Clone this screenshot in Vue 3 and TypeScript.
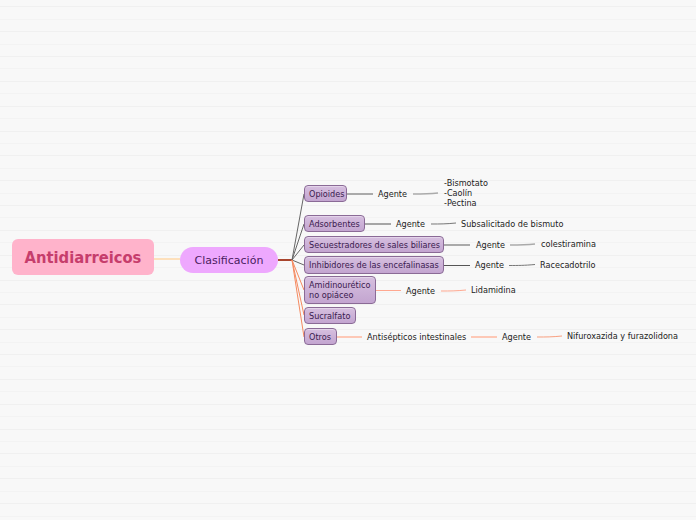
<script setup lang="ts">
interface Box { text: string[]; x: number; y: number; w: number; h: number }
interface Label { text: string[]; x: number; y: number }
interface Wire { d: string; c: string; w: number }

const rules = Array.from({ length: 42 }, (_, i) => ({
  y: Math.round(6.3 + i * 12.42) + 0.5,
  c: i % 2 === 0 ? '#f0f0f0' : '#f3f3f3',
}))

const boxes: Box[] = [
  { text: ['Opioides'], x: 304, y: 185, w: 43, h: 17 },
  { text: ['Adsorbentes'], x: 304, y: 215, w: 61, h: 17 },
  { text: ['Secuestradores de sales biliares'], x: 304, y: 236, w: 140, h: 17 },
  { text: ['Inhibidores de las encefalinasas'], x: 304, y: 256, w: 140, h: 18 },
  { text: ['Amidinourético', 'no opiáceo'], x: 304, y: 276, w: 72, h: 28 },
  { text: ['Sucralfato'], x: 304, y: 307, w: 52, h: 17 },
  { text: ['Otros'], x: 304, y: 328, w: 33, h: 17 },
]

const labels: Label[] = [
  { text: ['Agente'], x: 378, y: 194 },
  { text: ['-Bismotato', '-Caolín', '-Pectina'], x: 444, y: 193 },
  { text: ['Agente'], x: 396, y: 224 },
  { text: ['Subsalicitado de bismuto'], x: 461, y: 224 },
  { text: ['Agente'], x: 476, y: 245 },
  { text: ['colestiramina'], x: 541, y: 244 },
  { text: ['Agente'], x: 475, y: 265 },
  { text: ['Racecadotrilo'], x: 540, y: 265 },
  { text: ['Agente'], x: 406, y: 291 },
  { text: ['Lidamidina'], x: 471, y: 290 },
  { text: ['Antisépticos intestinales'], x: 367, y: 337 },
  { text: ['Agente'], x: 502, y: 337 },
  { text: ['Nifuroxazida y furazolidona'], x: 567, y: 336 },
]

const dark = '#555555'
const gray = '#aaaaaa'
const salmon = '#ffa890'
const orange = '#f58a60'

const wires: Wire[] = [
  { d: 'M154 259 H180', c: '#ffd8a8', w: 1.5 },
  { d: 'M278 260 H292', c: '#a8452d', w: 2 },
  { d: 'M292 260 L304 194', c: '#666', w: 1 },
  { d: 'M292 260 L304 224', c: '#666', w: 1 },
  { d: 'M292 260 L304 245', c: '#666', w: 1 },
  { d: 'M292 260 L304 265', c: '#666', w: 1 },
  { d: 'M292 260 L304 290', c: orange, w: 1 },
  { d: 'M292 260 L304 315', c: orange, w: 1 },
  { d: 'M292 260 L304 337', c: orange, w: 1 },
  { d: 'M347 194 H373', c: gray, w: 2 },
  { d: 'M413 194 C422 194 428 194 438 193', c: gray, w: 1.5 },
  { d: 'M365 224 H391', c: dark, w: 1 },
  { d: 'M431 224 C440 224 446 224 456 223', c: '#777', w: 1 },
  { d: 'M444 245 H470', c: gray, w: 2 },
  { d: 'M510 245 C519 245 525 245 535 244', c: gray, w: 1.5 },
  { d: 'M444 265.5 H470', c: dark, w: 1 },
  { d: 'M509 265.5 C518 265.5 524 265.5 535 264.5', c: '#777', w: 1 },
  { d: 'M376 290.5 H401', c: salmon, w: 1 },
  { d: 'M441 291 C450 291 456 291 466 290', c: salmon, w: 1 },
  { d: 'M337 337 H362', c: '#ffb8a0', w: 1.5 },
  { d: 'M471 337 H497', c: '#ffb8a0', w: 1.5 },
  { d: 'M537 337 C546 337 552 337 562 336', c: '#f8a080', w: 1 },
]

const boxStyle = (b: Box) => ({ left: `${b.x}px`, top: `${b.y}px`, width: `${b.w}px`, height: `${b.h}px` })
const labelStyle = (l: Label) => ({ left: `${l.x}px`, top: `${l.y - (l.text.length * 10) / 2}px` })
</script>

<template>
  <main class="canvas">
    <svg class="wires" width="696" height="520" viewBox="0 0 696 520" aria-hidden="true">
      <line v-for="r in rules" :key="r.y" x1="0" x2="696" :y1="r.y" :y2="r.y" :stroke="r.c" stroke-width="1" />
      <path v-for="w in wires" :key="w.d" :d="w.d" :stroke="w.c" :stroke-width="w.w" fill="none" />
    </svg>

    <div class="root">Antidiarreicos</div>
    <div class="branch">Clasificación</div>

    <div v-for="b in boxes" :key="b.text[0]" class="box" :style="boxStyle(b)">
      <span v-for="t in b.text" :key="t">{{ t }}</span>
    </div>

    <div v-for="(l, i) in labels" :key="i" class="label" :style="labelStyle(l)">
      <span v-for="t in l.text" :key="t">{{ t }}</span>
    </div>
  </main>
</template>

<style scoped>
.canvas {
  position: relative;
  width: 696px;
  height: 520px;
  overflow: hidden;
  background: #f8f8f8;
  font-family: "DejaVu Sans", sans-serif;
}
.wires {
  position: absolute;
  left: 0;
  top: 0;
}
.root,
.branch,
.box,
.label {
  position: absolute;
}
.root {
  left: 12px;
  top: 239px;
  width: 142px;
  height: 36px;
  display: flex;
  align-items: center;
  justify-content: center;
  border-radius: 6px;
  background: #ffb3cb;
  color: #c63d6c;
  font-family: "DejaVu Sans Condensed", "DejaVu Sans", sans-serif;
  font-size: 16.4px;
  font-weight: 700;
}
.branch {
  left: 180px;
  top: 247px;
  width: 98px;
  height: 26px;
  display: flex;
  align-items: center;
  justify-content: center;
  border-radius: 13px;
  background: #eea8fe;
  color: #4a2060;
  font-size: 11px;
}
.box {
  box-sizing: border-box;
  display: flex;
  flex-direction: column;
  justify-content: center;
  padding-left: 4px;
  border: 1px solid #8a6a96;
  border-radius: 4px;
  background: linear-gradient(#d6bfdf, #c3a5d0);
  box-shadow: inset 0 1px 0 #e4d4ea;
  color: #3a1a4e;
  font-size: 8.15px;
  line-height: 10px;
  white-space: nowrap;
}
.label {
  display: flex;
  flex-direction: column;
  color: #222;
  font-size: 8.15px;
  line-height: 10px;
  white-space: nowrap;
}
</style>
